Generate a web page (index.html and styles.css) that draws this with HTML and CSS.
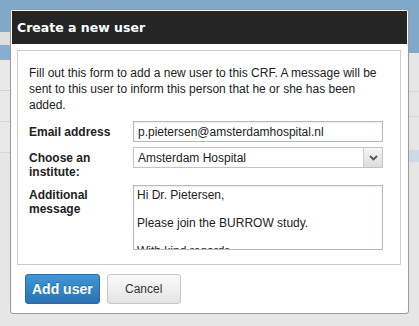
FILE: index.html
```html
<!DOCTYPE html>
<html lang="en">
<head>
  <meta charset="UTF-8" />
  <title>Create a new user</title>
  <link rel="stylesheet" href="styles.css">
</head>
<body>
  <div class="page">
    <div class="topbar"></div>
    <div class="content">
      <div class="sidebar">
        <div class="side-tab"></div>
        <div class="side-item active"></div>
        <div class="side-item"></div>
        <div class="side-item"></div>
        <div class="side-item"></div>
      </div>
      <div class="main">
        <div class="main-head"></div>
        <div class="main-row tall"></div>
        <div class="main-row"></div>
        <div class="main-row mid"></div>
        <div class="main-row selected"></div>
      </div>
    </div>
  </div>

  <div class="dialog">
    <div class="dialog-header">Create a new user</div>

    <div class="dialog-body">
      <p class="intro">Fill out this form to add a new user to this CRF. A message will be sent to this user to inform this person that he or she has been added.</p>

      <div class="form-grid">
        <label class="field-label" for="email">Email address</label>
        <input class="field-input" id="email" type="text" value="p.pietersen@amsterdamhospital.nl">

        <label class="field-label" for="institute">Choose an institute:</label>
        <div class="select-box">
          <select id="institute" class="select-input">
            <option>Amsterdam Hospital</option>
          </select>
          <span class="select-arrow">
            <svg width="9" height="6" viewBox="0 0 9 6"><path d="M1 1 L4.5 4.5 L8 1" fill="none" stroke="#555" stroke-width="1.8"/></svg>
          </span>
        </div>

        <label class="field-label" for="message">Additional message</label>
        <textarea class="field-text" id="message">Hi Dr. Pietersen,

Please join the BURROW study.

With kind regards,</textarea>
      </div>
    </div>

    <div class="dialog-footer">
      <button class="btn btn-primary">Add user</button>
      <button class="btn btn-cancel">Cancel</button>
    </div>
  </div>
</body>
</html>
```

FILE: styles.css
```css
body {
  margin: 0;
  font-family: "Liberation Sans", Arial, sans-serif;
  font-size: 12px;
  color: #222;
  background-color: #e6e6e6;
}

/* page behind the dialog */
.page {
  height: 326px;
  overflow: hidden;
}

.topbar {
  height: 32px;
  background-color: #80a8c8;
}

.content {
  display: flex;
}

.sidebar {
  width: 200px;
}

.side-tab {
  height: 13px;
  background-color: #dedede;
}

.side-item {
  height: 30px;
  border-bottom: 1px solid #d6d6d6;
  background-color: #e9e9e9;
}

.side-item.active {
  height: 15px;
  border-bottom: none;
  background-color: #86aed0;
}

.main {
  flex: 1;
}

.main-head {
  height: 21px;
  background-color: #80a8c8;
}

.main-row {
  height: 24px;
  border-bottom: 1px solid #d4d4d4;
  background-color: #e6e6e6;
}

.main-row.tall {
  height: 38px;
}

.main-row.mid {
  height: 33px;
  border-bottom: none;
}

.main-row.selected {
  height: 12px;
  border-bottom: none;
  background-color: #cbdae6;
}

/* dialog */
.dialog {
  position: absolute;
  left: 10px;
  top: 9px;
  width: 399px;
  box-sizing: border-box;
  padding: 1px;
  background-color: #fff;
  border: 1px solid #9a9a9a;
  border-radius: 3px;
}

.dialog-header {
  height: 33px;
  line-height: 33px;
  padding-left: 5px;
  background-color: #252525;
  color: #fff;
  font-family: "DejaVu Sans", Verdana, sans-serif;
  font-weight: bold;
  font-size: 12.5px;
}

.dialog-body {
  margin: 6px 6px 0 5px;
  padding: 14px 11px 14px;
  border: 1px solid #cccccc;
}

.intro {
  margin: 0 0 8px;
  line-height: 16px;
}

.form-grid {
  display: grid;
  grid-template-columns: 104px 250px;
  row-gap: 5px;
}

.field-label {
  font-weight: bold;
  line-height: 14px;
  padding-top: 4px;
}

.field-input,
.field-text {
  box-sizing: border-box;
  width: 250px;
  margin: 0;
  border: 1px solid #b4b8c8;
  font-family: "Liberation Sans", Arial, sans-serif;
  font-size: 12px;
  color: #222;
  box-shadow: inset 0 1px 2px rgba(0, 0, 0, 0.08);
}

.field-input {
  height: 21px;
  padding: 0 4px;
}

.field-text {
  height: 65px;
  margin-top: 1px;
  padding: 2px 3px;
  line-height: 14px;
  resize: none;
  overflow: hidden;
}

.select-box {
  display: flex;
  height: 21px;
  box-sizing: border-box;
  border: 1px solid #c4c4c4;
  background-color: #fff;
}

.select-input {
  flex: 1;
  appearance: none;
  border: none;
  margin: 0;
  padding: 0 4px;
  background: transparent;
  font-family: "Liberation Sans", Arial, sans-serif;
  font-size: 12px;
  color: #222;
}

.select-arrow {
  width: 18px;
  display: flex;
  align-items: center;
  justify-content: center;
  border-left: 1px solid #cfcfcf;
  background: linear-gradient(#f6f6f6, #dcdcdc);
}

.dialog-footer {
  display: flex;
  gap: 7px;
  padding: 9px 13px 8px;
}

.btn {
  height: 30px;
  padding: 0 6px;
  border-radius: 3px;
  font-family: "Liberation Sans", Arial, sans-serif;
  cursor: pointer;
}

.btn-primary {
  border: 1px solid #2a6aa6;
  background: linear-gradient(#3f97d6, #2a72b4);
  color: #fff;
  font-weight: bold;
  font-size: 14px;
  text-shadow: 0 -1px 0 rgba(0, 0, 0, 0.25);
}

.btn-cancel {
  min-width: 74px;
  border: 1px solid #c8c8c8;
  background: linear-gradient(#fafafa, #e4e4e4);
  color: #333;
  font-size: 12px;
}
```
